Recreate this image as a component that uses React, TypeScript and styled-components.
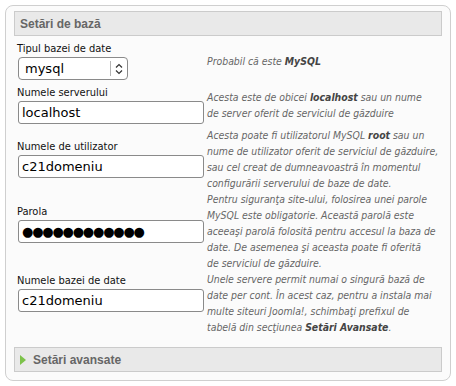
import React from 'react';
import styled, { createGlobalStyle } from 'styled-components';

const GlobalStyle = createGlobalStyle`
  body {
    margin: 0;
    background: #fff;
    font-family: 'DejaVu Sans', sans-serif;
  }
`;

type Field = {
  label: string;
  value: string;
  kind?: 'select' | 'text' | 'password';
  shift?: number;
  desc: React.ReactNode;
};

const fields: Field[] = [
  {
    label: 'Tipul bazei de date',
    value: 'mysql',
    kind: 'select',
    desc: (
      <>
        Probabil că este <b>MySQL</b>
      </>
    ),
  },
  {
    label: 'Numele serverului',
    value: 'localhost',
    desc: (
      <>
        Acesta este de obicei <b>localhost</b> sau un nume<br />
        de server oferit de serviciul de găzduire
      </>
    ),
  },
  {
    label: 'Numele de utilizator',
    value: 'c21domeniu',
    desc: (
      <>
        Acesta poate fi utilizatorul MySQL <b>root</b> sau un<br />
        nume de utilizator oferit de serviciul de găzduire,<br />
        sau cel creat de dumneavoastră în momentul<br />
        configurării serverului de baze de date.
      </>
    ),
  },
  {
    label: 'Parola',
    value: '●●●●●●●●●●●●',
    kind: 'password',
    shift: 14,
    desc: (
      <>
        Pentru siguranţa site-ului, folosirea unei parole<br />
        MySQL este obligatorie. Această parolă este<br />
        aceeaşi parolă folosită pentru accesul la baza de<br />
        date. De asemenea şi aceasta poate fi oferită<br />
        de serviciul de găzduire.
      </>
    ),
  },
  {
    label: 'Numele bazei de date',
    value: 'c21domeniu',
    shift: 20,
    desc: (
      <>
        Unele servere permit numai o singură bază de<br />
        date per cont. În acest caz, pentru a instala mai<br />
        multe siteuri Joomla!, schimbaţi prefixul de<br />
        tabelă din secţiunea <b>Setări Avansate</b>.
      </>
    ),
  },
];

const App = () => {
  return (
    <>
      <GlobalStyle />
      <Panel>
        <Bar>
          <BarTitle>Setări de bază</BarTitle>
        </Bar>
        <Form>
          {fields.map((f) => (
            <Row key={f.label}>
              <FieldBlock $shift={f.shift ?? 0}>
                <Label>{f.label}</Label>
                {f.kind === 'select' ? (
                  <SelectBox>
                    <SelectValue>{f.value}</SelectValue>
                    <SelectArrows>
                      <svg width="8" height="12" viewBox="0 0 8 12" fill="none" stroke="#333" strokeWidth="1.2">
                        <path d="M1 4.5 L4 1.5 L7 4.5" />
                        <path d="M1 7.5 L4 10.5 L7 7.5" />
                      </svg>
                    </SelectArrows>
                  </SelectBox>
                ) : (
                  <TextInput readOnly value={f.value} $dots={f.kind === 'password'} />
                )}
              </FieldBlock>
              <Desc>{f.desc}</Desc>
            </Row>
          ))}
        </Form>
        <Bar $footer>
          <Arrow />
          <BarTitle>Setări avansate</BarTitle>
        </Bar>
      </Panel>
    </>
  );
};

const Panel = styled('div')`
  margin: 5px;
  width: 446px;
  height: 376px;
  box-sizing: border-box;
  border: 1px solid #cfcfcf;
  border-radius: 8px;
  background: #fbfbfb;
  display: flex;
  flex-direction: column;
  padding: 5px 8px 8px 8px;
`;

const Bar = styled('div')<{ $footer?: boolean }>`
  display: flex;
  align-items: center;
  gap: 7px;
  height: 25px;
  box-sizing: border-box;
  padding-left: 5px;
  background: #e9e9e9;
  border: 1px solid #cbcbcb;
  margin-top: ${({ $footer }) => ($footer ? 'auto' : '0')};
`;

const BarTitle = styled('span')`
  font-family: 'Liberation Sans', Arial, sans-serif;
  font-weight: bold;
  font-size: 12px;
  color: #666;
`;

const Arrow = styled('span')`
  width: 0;
  height: 0;
  border-top: 5px solid transparent;
  border-bottom: 5px solid transparent;
  border-left: 6px solid #7cc24a;
`;

const Form = styled('div')`
  display: flex;
  flex-direction: column;
  padding: 3px 0 0 3px;
`;

const Row = styled('div')`
  display: grid;
  grid-template-columns: 189px 1fr;
  align-items: center;
`;

const FieldBlock = styled('div')<{ $shift: number }>`
  display: flex;
  flex-direction: column;
  align-items: flex-start;
  gap: 2px;
  padding: 3px 0;
  margin-bottom: ${({ $shift }) => $shift}px;
`;

const Label = styled('label')`
  font-family: 'DejaVu Sans Condensed', 'DejaVu Sans', sans-serif;
  font-stretch: condensed;
  font-size: 11px;
  line-height: 13px;
  color: #111;
`;

const TextInput = styled('input')<{ $dots?: boolean }>`
  width: 186px;
  height: 23px;
  box-sizing: border-box;
  margin: 0 0 0 1px;
  padding: 0 3px;
  border: 1px solid #8a8a8a;
  border-radius: 3px;
  background: #fff;
  font-family: 'DejaVu Sans', sans-serif;
  font-size: 13px;
  letter-spacing: ${({ $dots }) => ($dots ? '-1.2px' : '0')};
  color: #000;
  outline: none;
`;

const SelectBox = styled('div')`
  width: 110px;
  height: 23px;
  box-sizing: border-box;
  margin-left: 1px;
  display: flex;
  align-items: stretch;
  border: 1px solid #8a8a8a;
  border-radius: 4px;
  background: #fff;
`;

const SelectValue = styled('span')`
  flex: 1;
  display: flex;
  align-items: center;
  padding-left: 6px;
  font-family: 'DejaVu Sans', sans-serif;
  font-size: 13px;
  color: #000;
`;

const SelectArrows = styled('span')`
  width: 16px;
  margin: 3px 0;
  border-left: 1px solid #b5b5b5;
  display: flex;
  align-items: center;
  justify-content: center;
`;

const Desc = styled('div')`
  font-family: 'DejaVu Sans Condensed', 'DejaVu Sans', sans-serif;
  font-stretch: condensed;
  font-style: italic;
  font-size: 10.4px;
  line-height: 16px;
  color: #666;
  padding-left: 1px;
  white-space: nowrap;
  b {
    color: #444;
  }
`;

export default App;
